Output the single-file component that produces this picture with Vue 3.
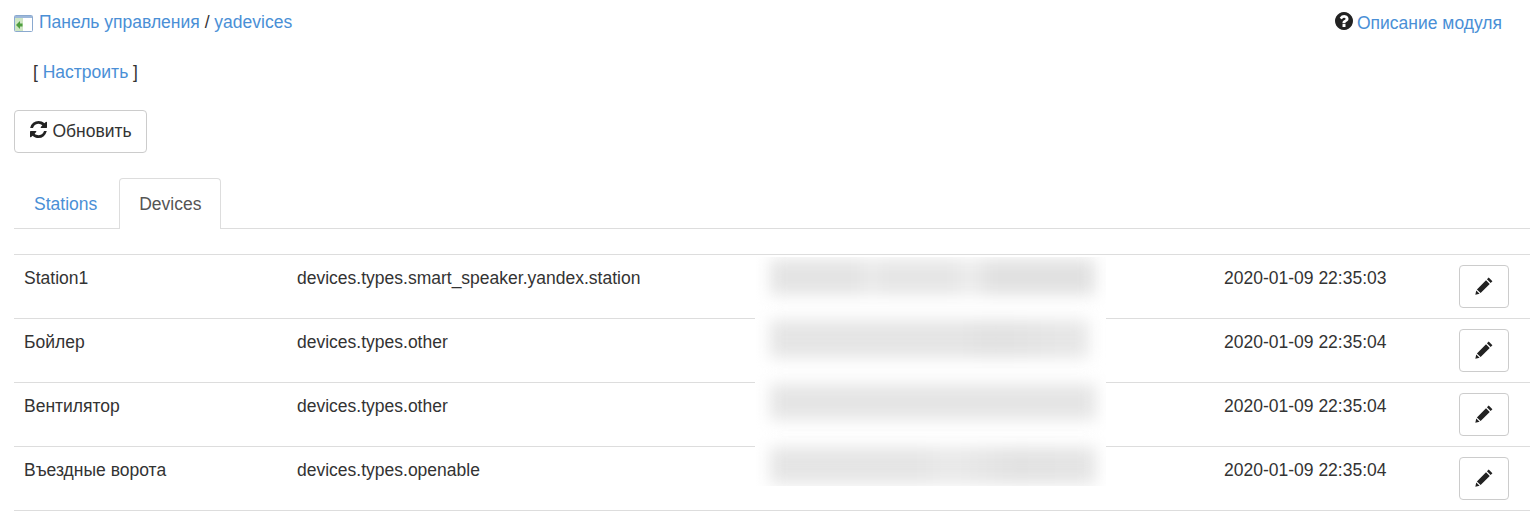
<script setup>
const devices = [
  { name: 'Station1', type: 'devices.types.smart_speaker.yandex.station', date: '2020-01-09 22:35:03' },
  { name: 'Бойлер', type: 'devices.types.other', date: '2020-01-09 22:35:04' },
  { name: 'Вентилятор', type: 'devices.types.other', date: '2020-01-09 22:35:04' },
  { name: 'Въездные ворота', type: 'devices.types.openable', date: '2020-01-09 22:35:04' }
]
const refreshPath = 'M1639 1056q0 5-1 7-64 268-268 434.5t-478 166.5q-146 0-282.5-55t-243.5-157l-129 129q-19 19-45 19t-45-19-19-45v-448q0-26 19-45t45-19h448q26 0 45 19t19 45-19 45l-137 137q71 66 161 102t187 36q134 0 250-65t186-179q11-17 53-117 8-23 30-23h192q13 0 22.5 9.5t9.5 22.5zm25-800v448q0 26-19 45t-45 19h-448q-26 0-45-19t-19-45 19-45l138-138q-148-137-349-137-134 0-250 65t-186 179q-11 17-53 117-8 23-30 23h-199q-13 0-22.5-9.5t-9.5-22.5v-7q65-268 270-434.5t480-166.5q146 0 284 55.5t245 156.5l130-129q19-19 45-19t45 19 19 45z'
const helpPath = 'M1024 1376v-192q0-14-9-23t-23-9h-192q-14 0-23 9t-9 23v192q0 14 9 23t23 9h192q14 0 23-9t9-23zm256-672q0-88-55.5-163t-138.5-116-170-41q-243 0-371 213-15 24 8 42l132 100q7 6 19 6 16 0 25-12 53-68 86-92 34-24 86-24 48 0 85.5 26t37.5 59q0 38-20 61t-68 45q-63 28-115.5 86.5t-52.5 125.5v36q0 14 9 23t23 9h192q14 0 23-9t9-23q0-19 21.5-49.5t54.5-49.5q32-18 49-28.5t46-35 44.5-48 28-60.5 12.5-81zm384 192q0 209-103 385.5t-279.5 279.5-385.5 103-385.5-103-279.5-279.5-103-385.5 103-385.5 279.5-279.5 385.5-103 385.5 103 279.5 279.5 103 385.5z'
</script>

<template>
  <div class="page">
    <header class="top">
      <div class="crumbs">
        <svg class="back" viewBox="0 0 19 17" width="19" height="17" aria-hidden="true">
          <rect x="0.5" y="0.5" width="18" height="16" rx="1" fill="#fff" stroke="#8aa9cf" />
          <rect x="1" y="1" width="17" height="2" fill="#9db8da" />
          <rect x="1" y="3" width="8" height="13" fill="#cfe6c4" />
          <path d="M2 10l4-4v2.500h2.500v3H6V14z" fill="#4f9e3f" />
        </svg>
        <a>Панель управления</a> / <a>yadevices</a>
      </div>
      <a class="help">
        <svg viewBox="128 128 1536 1536" width="18" height="18" aria-hidden="true"><path :d="helpPath" fill="#222" /></svg>
        <span>Описание модуля</span>
      </a>
    </header>

    <p class="config">[ <a>Настроить</a> ]</p>

    <button class="btn refresh" type="button">
      <svg viewBox="128 128 1536 1536" width="17" height="17" aria-hidden="true"><path :d="refreshPath" fill="#222" /></svg>
      <span>Обновить</span>
    </button>

    <nav class="tabs">
      <a class="tab">Stations</a>
      <a class="tab active">Devices</a>
    </nav>

    <div class="table-wrap">
      <table>
        <colgroup>
          <col class="c1" /><col class="c2" /><col class="c3" /><col class="c4" /><col />
        </colgroup>
        <tbody>
          <tr v-for="d in devices" :key="d.name">
            <td class="text">{{ d.name }}</td>
            <td class="text">{{ d.type }}</td>
            <td></td>
            <td class="text">{{ d.date }}</td>
            <td>
              <button class="btn edit" type="button" aria-label="Редактировать">
                <svg viewBox="0 0 16 16" width="18" height="18" aria-hidden="true">
                  <path d="M12.200 0.500L15.500 3.800 13.900 5.400 10.600 2.100z M9.800 2.900L13.100 6.200 5 14.300 1.700 11z M1.100 11.900L4.100 14.900 0.300 15.700z" fill="#222" />
                </svg>
              </button>
            </td>
          </tr>
        </tbody>
      </table>
      <div class="masked" aria-hidden="true">
        <div class="smear s1"></div>
        <div class="smear s2"></div>
        <div class="smear s3"></div>
        <div class="smear s4"></div>
      </div>
    </div>
  </div>
</template>

<style>
html, body { background: #fff; }
</style>

<style scoped>
.page {
  padding: 11px 0 0 14px;
  font: 17.500px/22.800px "Liberation Sans", Arial, sans-serif;
  color: #333;
}
a { color: #4a8fd6; text-decoration: none; cursor: pointer; }
.top {
  display: flex;
  justify-content: space-between;
  align-items: flex-start;
  padding-right: 28px;
}
.crumbs { display: flex; align-items: center; white-space: pre; }
.back { margin: 2px 6px 0 0; flex: none; }
.help { display: flex; align-items: center; gap: 4px; }
.help svg { margin-top: -2px; }
.help span { position: relative; top: 1px; }
.config { margin: 27px 0 0 19px; white-space: pre; }
.btn {
  background: #fff;
  border: 1px solid #ccc;
  border-radius: 4px;
  font: inherit;
  color: #333;
  display: inline-flex;
  align-items: center;
  justify-content: center;
  height: 43px;
  padding: 0;
  cursor: pointer;
}
.refresh { display: flex; margin-top: 26px; width: 133px; gap: 5px; }
.refresh svg { margin-top: -3px; margin-left: 1px; }
.edit { width: 50px; margin-left: -1px; }
.tabs {
  display: flex;
  gap: 2px;
  margin-top: 25px;
  height: 50px;
  border-bottom: 1px solid #ddd;
}
.tab {
  padding: 14px 19px 0;
  height: 50px;
  box-sizing: border-box;
  border: 1px solid transparent;
  border-bottom: 0;
  border-radius: 4px 4px 0 0;
}
.tab.active {
  color: #555;
  height: 51px;
  background: #fff;
  border-color: #ddd;
}
.table-wrap { position: relative; margin-top: 25px; }
table {
  width: 1516px;
  table-layout: fixed;
  border-collapse: collapse;
}
.c1 { width: 273px; }
.c2 { width: 460px; }
.c3 { width: 467px; }
.c4 { width: 236px; }
tr { height: 63.800px; }
td {
  box-sizing: border-box;
  padding: 10px;
  vertical-align: top;
  border-top: 1px solid #ddd;
  border-bottom: 1px solid #ddd;
  white-space: nowrap;
}
td.text { padding-top: 12px; }
.edit { display: flex; }
.masked {
  position: absolute;
  left: 741px;
  top: 3px;
  width: 351px;
  height: 229px;
  background: #fff;
  overflow: hidden;
}
.smear {
  position: absolute;
  left: 15px;
  height: 36px;
  filter: blur(8px);
  background: #e4e4e4;
}
.s1 {
  top: 2px;
  width: 325px;
  background: linear-gradient(90deg, #e4e4e4 0 27%, #ececec 31%, #e6e6e6 35% 56%, #eeeeee 62%, #e1e1e1 68% 100%);
}
.s2 { top: 63px; width: 319px; height: 38px; background: linear-gradient(90deg, #e5e5e5 0 60%, #e1e1e1 70%, #e8e8e8 100%); }
.s3 { top: 127px; width: 326px; background: #e5e5e5; }
.s4 { top: 190px; width: 326px; height: 37px; background: linear-gradient(90deg, #e5e5e5 0 45%, #eaeaea 55%, #e2e2e2 75%, #e5e5e5 100%); }
</style>
